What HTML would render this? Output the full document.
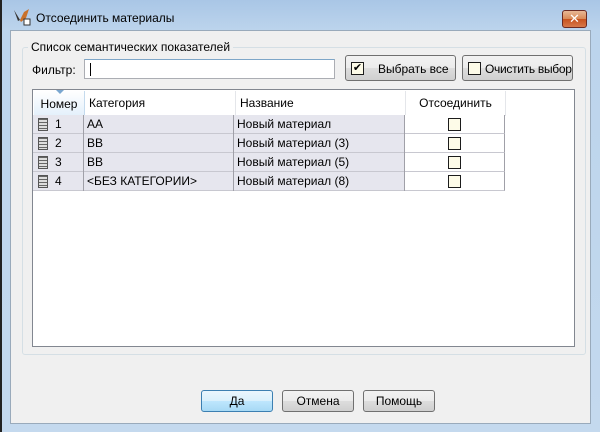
<!DOCTYPE html>
<html><head><meta charset="utf-8"><style>
*{box-sizing:border-box;margin:0;padding:0}
body{width:600px;height:432px;overflow:hidden;background:#fff;font-family:"Liberation Sans","DejaVu Sans",sans-serif;font-size:12px;color:#000;position:relative}
.frame{position:absolute;left:0;top:0;width:600px;height:432px;background:linear-gradient(#a9c6e6,#bcd4ec 30px,#c4d9ee);border-left:2px solid #222}
.title{position:absolute;left:36px;top:11px;font-size:12px;color:#000}
.close{position:absolute;left:562px;top:10px;width:25px;height:18px;border:1px solid #6b2a22;border-radius:3px;background:linear-gradient(#e8b896,#d98a56 50%,#c7521e 51%,#d7784a);color:#fff;font-weight:bold;font-size:13px;text-align:center;line-height:15px}
.client{position:absolute;left:10px;top:30px;width:581px;height:394px;background:#f0f0f0;border:1px solid #9ab}
.abs{position:absolute;white-space:nowrap}
.grp{left:22px;top:47px;width:564px;height:308px;border:1px solid #d5dfe5;border-radius:3px}
.btn{border:1px solid #707070;border-radius:3px;background:linear-gradient(#f2f2f2,#ebebeb 50%,#dddddd 51%,#cfcfcf);text-align:center;white-space:nowrap}
.cb{display:inline-block;width:13px;height:13px;border:1px solid #1c1c1c;background:#fdfbe8;vertical-align:middle}
.grid{left:32px;top:89px;width:543px;height:258px;border:1px solid #828790;background:#fff}
.row{position:absolute;left:1px;height:19px;width:472px;background:#e6e6ee;border-bottom:1px solid #c8c8d0}
.cell{position:absolute;top:0;height:19px;line-height:19px;border-right:1px solid #a0a0a8;padding-left:3px;white-space:nowrap}
.ck{background:#fff;text-align:center;padding:0;border-bottom:1px solid #c8c8d0}
.ico{position:absolute;left:5px;top:3px;width:10px;height:13px;border:1px solid #555;background:repeating-linear-gradient(#666 0 1px,#ddd 1px 3px)}
.hd{position:absolute;top:1px;height:25px;line-height:25px;border-right:1px solid #e4e6ea}
</style></head><body>
<div class="frame"></div>
<svg class="abs" style="left:12px;top:6px" width="20" height="20" viewBox="0 0 20 20"><path d="M2 4 L8 14 L12 6 L17 3 L14 12 L9 16 Z" fill="#c9712a"/><path d="M2 4 L8 14 L6 15 Z" fill="#333"/><rect x="12" y="13" width="6" height="6" fill="#fff" stroke="#333" stroke-width="1"/></svg>
<div class="title">Отсоединить материалы</div>
<div class="close">✕</div>
<div class="client"></div>
<div class="abs grp"></div>
<div class="abs" style="left:28px;top:40px;background:#f0f0f0;padding:0 3px">Список семантических показателей</div>
<div class="abs" style="left:32px;top:63px">Фильтр:</div>
<div class="abs" style="left:84px;top:59px;width:251px;height:20px;border:1px solid #abadb3;border-top-color:#7ea6c8;background:#fff"><div style="position:absolute;left:5px;top:3px;width:1px;height:13px;background:#000"></div></div>
<div class="abs btn" style="left:345px;top:55px;width:111px;height:26px"><span class="cb" style="position:absolute;left:5px;top:6px;font-size:11px;line-height:11px;font-weight:bold">✔</span><span style="position:absolute;left:32px;top:6px">Выбрать все</span></div>
<div class="abs btn" style="left:462px;top:55px;width:111px;height:26px"><span class="cb" style="position:absolute;left:5px;top:6px"></span><span style="position:absolute;left:22px;top:6px;letter-spacing:-0.3px">Очистить выбор</span></div>
<div class="abs grid">
 <div class="hd" style="left:1px;width:51px;background:linear-gradient(#fff,#e3f0fb);border-right:1px solid #c5dbee;text-align:center;padding-top:1px">Номер<div style="position:absolute;left:22px;top:-1px;width:0;height:0;border-left:4px solid transparent;border-right:4px solid transparent;border-top:4px solid #7aa7d0"></div></div>
 <div class="hd" style="left:52px;width:151px;padding-left:4px">Категория</div>
 <div class="hd" style="left:203px;width:170px;padding-left:4px">Название</div>
 <div class="hd" style="left:373px;width:100px;text-align:center">Отсоединить</div>
</div>
<div class="abs" style="left:32px;top:89px">
 <div class="row" style="top:26px"><div class="cell" style="left:0;width:51px;padding-left:22px"><span class="ico"></span>1</div><div class="cell" style="left:51px;width:150px">АА</div><div class="cell" style="left:201px;width:171px">Новый материал</div><div class="cell ck" style="left:372px;width:100px"><span class="cb"></span></div></div>
 <div class="row" style="top:45px"><div class="cell" style="left:0;width:51px;padding-left:22px"><span class="ico"></span>2</div><div class="cell" style="left:51px;width:150px">ВВ</div><div class="cell" style="left:201px;width:171px">Новый материал (3)</div><div class="cell ck" style="left:372px;width:100px"><span class="cb"></span></div></div>
 <div class="row" style="top:64px"><div class="cell" style="left:0;width:51px;padding-left:22px"><span class="ico"></span>3</div><div class="cell" style="left:51px;width:150px">ВВ</div><div class="cell" style="left:201px;width:171px">Новый материал (5)</div><div class="cell ck" style="left:372px;width:100px"><span class="cb"></span></div></div>
 <div class="row" style="top:83px"><div class="cell" style="left:0;width:51px;padding-left:22px"><span class="ico"></span>4</div><div class="cell" style="left:51px;width:150px">&lt;БЕЗ КАТЕГОРИИ&gt;</div><div class="cell" style="left:201px;width:171px">Новый материал (8)</div><div class="cell ck" style="left:372px;width:100px"><span class="cb"></span></div></div>
</div>
<div class="abs btn" style="left:201px;top:390px;width:72px;height:22px;line-height:20px;border-color:#3c7fb1;background:linear-gradient(#eaf6fd,#d9f0fc 50%,#bee6fd 51%,#a7d9f5)">Да</div>
<div class="abs btn" style="left:282px;top:390px;width:72px;height:22px;line-height:20px">Отмена</div>
<div class="abs btn" style="left:363px;top:390px;width:72px;height:22px;line-height:20px">Помощь</div>
</body></html>
